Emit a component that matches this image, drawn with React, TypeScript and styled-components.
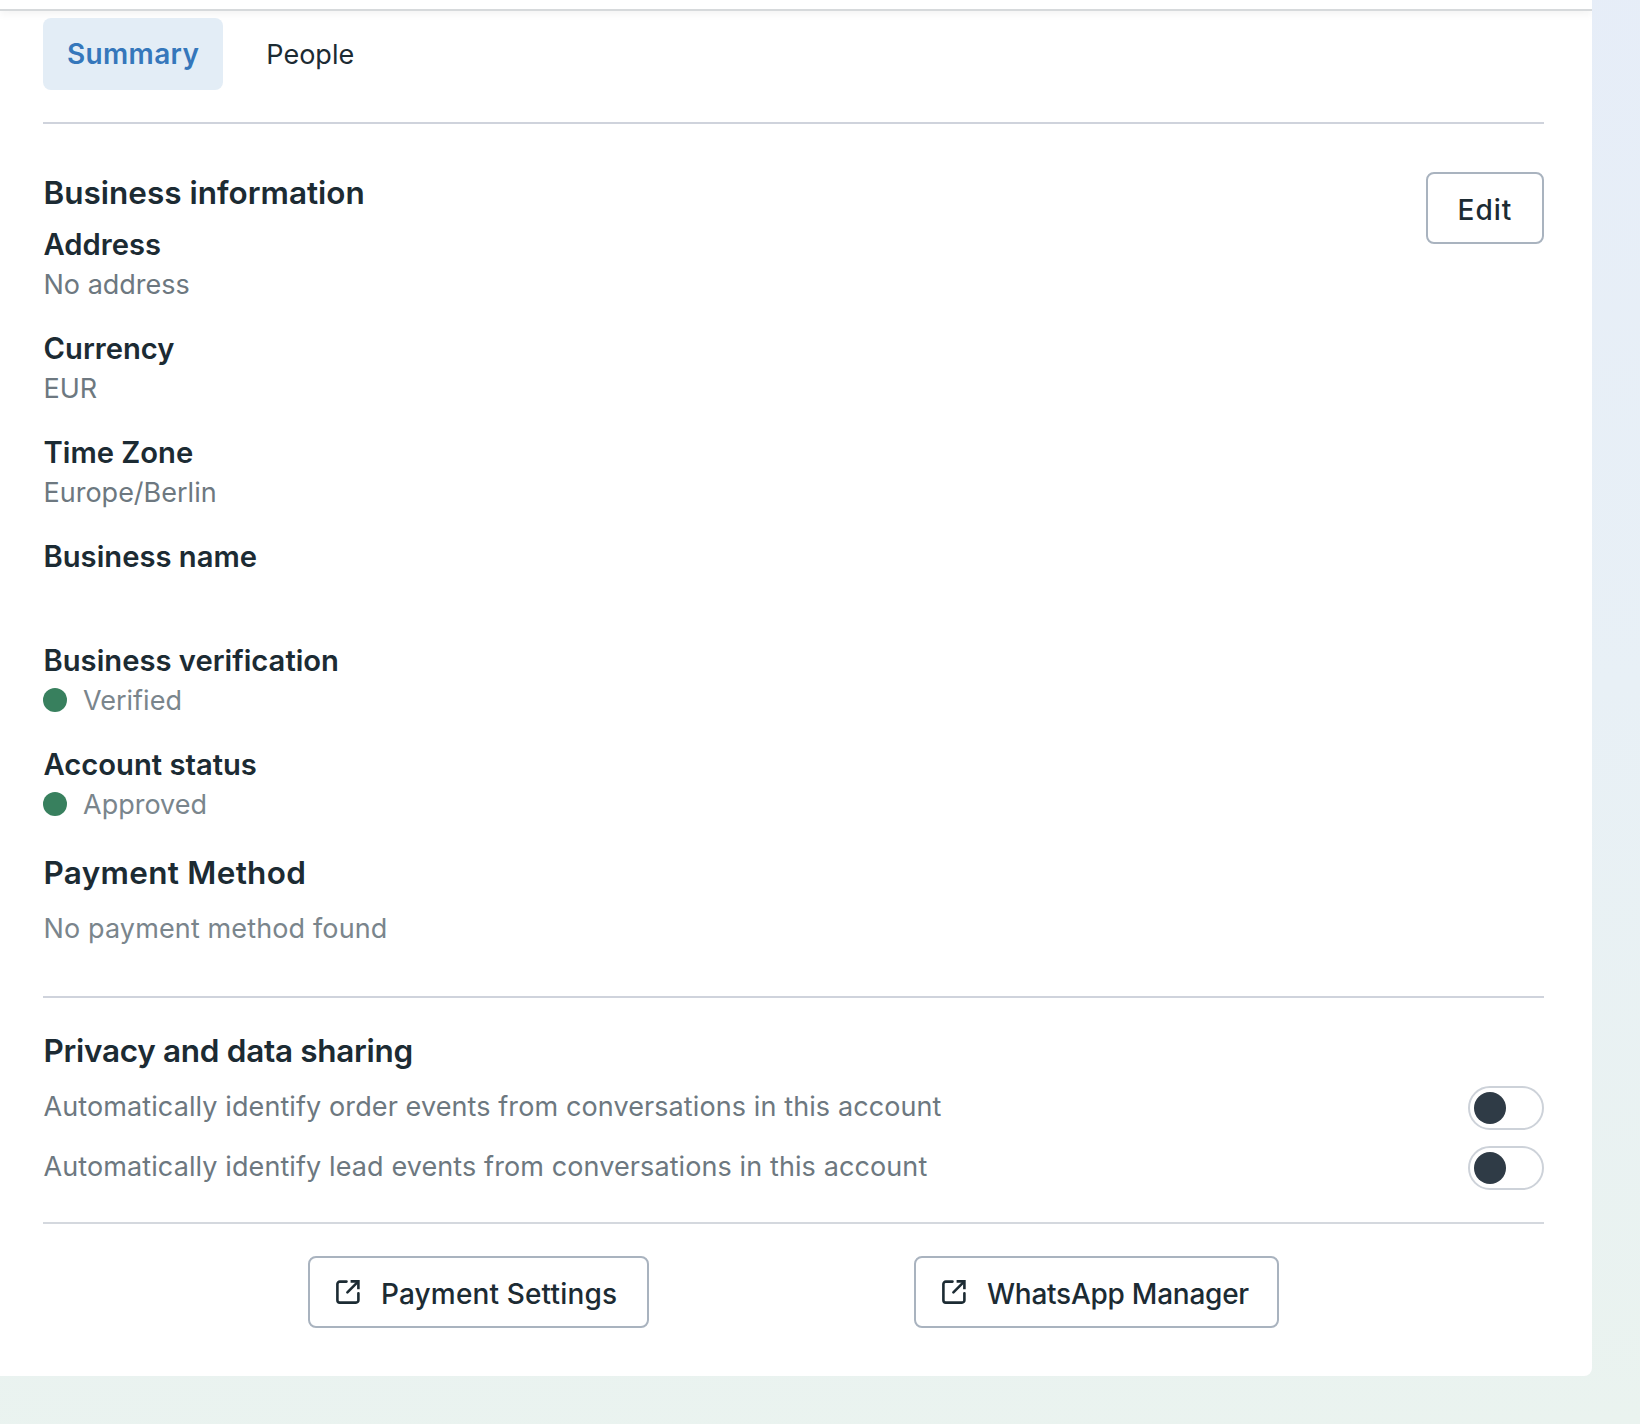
import React from "react";
import styled, { createGlobalStyle } from "styled-components";

const Global = createGlobalStyle`
  html, body { margin: 0; padding: 0; }
  body {
    min-height: 1424px;
    background: linear-gradient(178deg, #e6edf8 0%, #e8f0f6 50%, #eaf3ef 100%);
    font-family: Inter, "Noto Sans", sans-serif;
    color: #1c2b33;
  }
`;

const Panel = styled.main`
  width: 1592px;
  height: 1376px;
  box-sizing: border-box;
  background: #fff;
  border-bottom-right-radius: 8px;
  overflow: hidden;
`;

const TopStrip = styled.div`
  height: 9px;
  border-bottom: 2px solid #d6d9db;
  box-shadow: 0 3px 8px rgba(0, 0, 0, 0.05);
`;

const Content = styled.div`
  padding: 7px 48px 0 43px;
  display: flex;
  flex-direction: column;
`;

const Tabs = styled.nav`
  display: flex;
  gap: 19px;
  padding-bottom: 32px;
  border-bottom: 2px solid #cfd3dc;
`;

const Tab = styled.div<{ $active?: boolean }>`
  height: 72px;
  padding: 0 24px;
  display: flex;
  align-items: center;
  border-radius: 8px;
  font-size: ${(p) => (p.$active ? 28 : 27)}px;
  letter-spacing: ${(p) => (p.$active ? 0.35 : 0)}px;
  font-weight: ${(p) => (p.$active ? 600 : 400)};
  color: ${(p) => (p.$active ? "#3577bb" : "#1c2b33")};
  background: ${(p) => (p.$active ? "#e3edf6" : "transparent")};
`;

const Info = styled.section`
  position: relative;
  padding: 48px 0 47px;
  border-bottom: 2px solid #cfd3dc;
`;

const Heading = styled.h2<{ $track?: number }>`
  margin: 0 0 0 0.5px;
  font-size: 31.5px;
  line-height: 42px;
  font-weight: 600;
  letter-spacing: ${(p) => p.$track ?? 0}px;
`;

const OutlineButton = styled.button`
  box-sizing: border-box;
  border: 2px solid #a9b3bf;
  border-radius: 8px;
  background: #fff;
  color: #1c2b33;
  font-family: inherit;
  font-size: 28px;
  font-weight: 500;
  display: inline-flex;
  align-items: center;
  height: 72px;
  padding: 0;
`;

const EditAction = styled(OutlineButton)`
  position: absolute;
  top: 48px;
  right: 0;
  width: 118px;
  justify-content: center;
`;

const ButtonLabel = styled.span<{ $track: number }>`
  padding-top: 4px;
  letter-spacing: ${(p) => p.$track}px;
`;

const Fields = styled.div`
  display: flex;
  flex-direction: column;
  gap: 24px;
  margin-top: 11px;
`;

const Field = styled.div`
  display: flex;
  flex-direction: column;
`;

const Label = styled.div`
  margin-left: 0.5px;
  height: 40px;
  line-height: 39px;
  font-size: 29.2px;
  font-weight: 600;
`;

const Value = styled.div`
  height: 40px;
  line-height: 40px;
  margin-left: 0.5px;
  font-size: 27px;
  color: #6d7880;
`;

const StatusValue = styled.div`
  box-sizing: border-box;
  height: 40px;
  padding-bottom: 2px;
  display: flex;
  align-items: center;
  gap: 16px;
  font-size: 27px;
  color: #7a858c;
`;

const Dot = styled.span`
  width: 24px;
  height: 24px;
  border-radius: 50%;
  background: #38805e;
`;

const PaymentBlock = styled.div`
  margin-top: 27px;
`;

const PaymentValue = styled(Value)`
  margin-top: 15px;
  letter-spacing: 0.13px;
  color: #7a858c;
`;

const Privacy = styled.section`
  padding: 32px 0;
  border-bottom: 2px solid #d4d8de;
  display: flex;
  flex-direction: column;
`;

const ToggleRow = styled.div`
  display: flex;
  align-items: center;
  justify-content: space-between;
  height: 44px;
  margin-top: 14px;
  & + & {
    margin-top: 16px;
  }
`;

const RowText = styled.span`
  margin-left: 0.5px;
  margin-top: -4px;
  font-size: 27px;
  letter-spacing: 0.1px;
  color: #6d7880;
`;

const Toggle = styled.span`
  box-sizing: border-box;
  width: 76px;
  height: 44px;
  border: 2px solid #cdd2d9;
  border-radius: 22px;
  padding: 4px;
  background: #fff;
  display: flex;
`;

const Knob = styled.span`
  width: 32px;
  height: 32px;
  border-radius: 50%;
  background: #2f3b46;
`;

const Footer = styled.footer`
  display: flex;
  justify-content: space-evenly;
  padding-top: 32px;
`;

const LinkButton = styled(OutlineButton)<{ $w: number }>`
  width: ${(p) => p.$w}px;
  padding-left: 25px;
  gap: 20px;
`;

const ExternalIcon = () => (
  <svg width="26" height="26" viewBox="0 0 26 26" fill="none" stroke="#1c2b33" strokeWidth="2.6">
    <path d="M11.5 2.6H4.8A2.4 2.4 0 0 0 2.4 5v16.2a2.4 2.4 0 0 0 2.4 2.4H21a2.4 2.4 0 0 0 2.4-2.4v-7" strokeLinecap="round" />
    <path d="M12.4 13.4 22.6 3.2" strokeLinecap="round" />
    <path d="M15.6 2.4h7.8v7.8" />
  </svg>
);

const rows: [string, string][] = [
  ["Address", "No address"],
  ["Currency", "EUR"],
  ["Time Zone", "Europe/Berlin"],
  ["Business name", ""],
];

const statuses: [string, string][] = [
  ["Business verification", "Verified"],
  ["Account status", "Approved"],
];

export default function App() {
  return (
    <>
      <Global />
      <Panel>
        <TopStrip />
        <Content>
          <Tabs>
            <Tab $active>Summary</Tab>
            <Tab>People</Tab>
          </Tabs>
          <Info>
            <Heading>Business information</Heading>
            <EditAction>
              <ButtonLabel $track={1}>Edit</ButtonLabel>
            </EditAction>
            <Fields>
              {rows.map(([l, v]) => (
                <Field key={l}>
                  <Label>{l}</Label>
                  <Value>{v}</Value>
                </Field>
              ))}
              {statuses.map(([l, v]) => (
                <Field key={l}>
                  <Label>{l}</Label>
                  <StatusValue>
                    <Dot />
                    {v}
                  </StatusValue>
                </Field>
              ))}
            </Fields>
            <PaymentBlock>
              <Heading $track={0.3}>Payment Method</Heading>
              <PaymentValue>No payment method found</PaymentValue>
            </PaymentBlock>
          </Info>
          <Privacy>
            <Heading $track={-0.3}>Privacy and data sharing</Heading>
            <ToggleRow>
              <RowText>Automatically identify order events from conversations in this account</RowText>
              <Toggle>
                <Knob />
              </Toggle>
            </ToggleRow>
            <ToggleRow>
              <RowText>Automatically identify lead events from conversations in this account</RowText>
              <Toggle>
                <Knob />
              </Toggle>
            </ToggleRow>
          </Privacy>
          <Footer>
            <LinkButton $w={341}>
              <ExternalIcon />
              <ButtonLabel $track={0.15}>Payment Settings</ButtonLabel>
            </LinkButton>
            <LinkButton $w={365}>
              <ExternalIcon />
              <ButtonLabel $track={-0.25}>WhatsApp Manager</ButtonLabel>
            </LinkButton>
          </Footer>
        </Content>
      </Panel>
    </>
  );
}
